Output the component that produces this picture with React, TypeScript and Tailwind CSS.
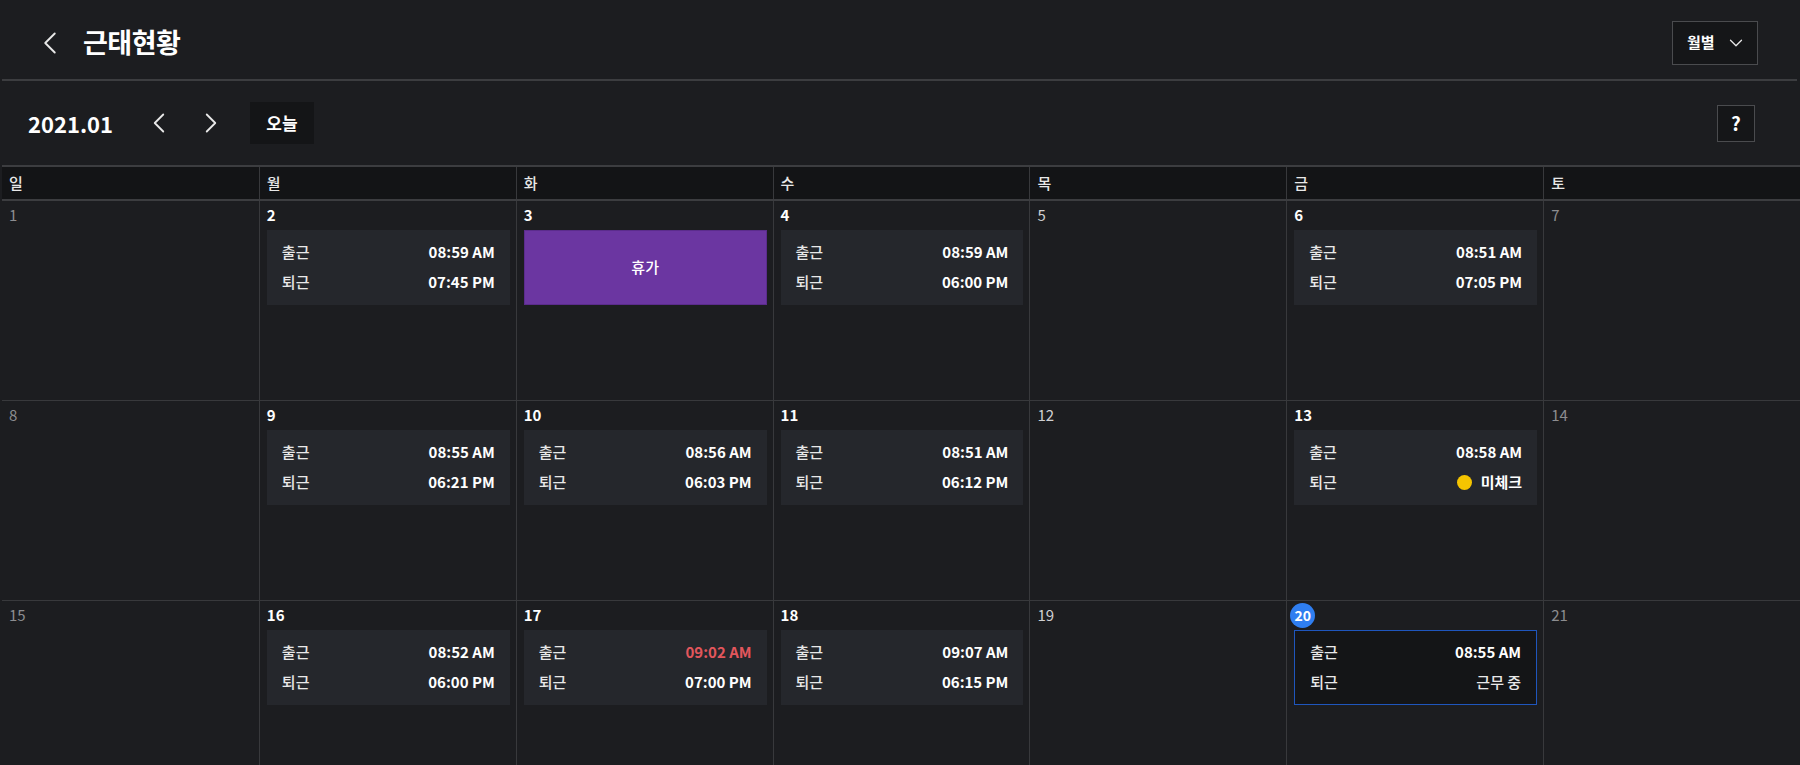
import { ChevronDown, ChevronLeft, ChevronRight } from "lucide-react";

type Day = {
  date: number;
  tone: "weekend" | "empty" | "work";
  inTime?: string;
  outTime?: string;
  late?: boolean;
  vacation?: boolean;
  unchecked?: boolean;
  today?: boolean;
};

const weekdays = ["일", "월", "화", "수", "목", "금", "토"];

const weeks: Day[][] = [
  [
    { date: 1, tone: "weekend" },
    { date: 2, tone: "work", inTime: "08:59 AM", outTime: "07:45 PM" },
    { date: 3, tone: "work", vacation: true },
    { date: 4, tone: "work", inTime: "08:59 AM", outTime: "06:00 PM" },
    { date: 5, tone: "empty" },
    { date: 6, tone: "work", inTime: "08:51 AM", outTime: "07:05 PM" },
    { date: 7, tone: "weekend" },
  ],
  [
    { date: 8, tone: "weekend" },
    { date: 9, tone: "work", inTime: "08:55 AM", outTime: "06:21 PM" },
    { date: 10, tone: "work", inTime: "08:56 AM", outTime: "06:03 PM" },
    { date: 11, tone: "work", inTime: "08:51 AM", outTime: "06:12 PM" },
    { date: 12, tone: "empty" },
    { date: 13, tone: "work", inTime: "08:58 AM", unchecked: true },
    { date: 14, tone: "weekend" },
  ],
  [
    { date: 15, tone: "weekend" },
    { date: 16, tone: "work", inTime: "08:52 AM", outTime: "06:00 PM" },
    { date: 17, tone: "work", inTime: "09:02 AM", outTime: "07:00 PM", late: true },
    { date: 18, tone: "work", inTime: "09:07 AM", outTime: "06:15 PM" },
    { date: 19, tone: "empty" },
    { date: 20, tone: "work", inTime: "08:55 AM", today: true },
    { date: 21, tone: "weekend" },
  ],
];

function DayNumber({ day }: { day: Day }) {
  if (day.today) {
    return (
      <div className="flex h-[28px] items-center pt-[1px]">
        <span className="-ml-[4px] flex h-[25px] w-[25px] items-center justify-center rounded-full bg-[#2f7ef0] text-[14px] font-bold text-white">
          {day.date}
        </span>
      </div>
    );
  }
  const color =
    day.tone === "weekend"
      ? "text-[#8c8d90] font-normal"
      : day.tone === "empty"
        ? "text-[#cfd0d2] font-normal"
        : "text-white font-bold";
  return <div className={`h-[28px] pt-[3px] text-[15px] leading-[22px] ${color}`}>{day.date}</div>;
}

function Cell({ day }: { day: Day }) {
  return (
    <div className="h-[199px] border-l border-[#38393c] pl-[7px] pr-[6px] first:border-l-0">
      <DayNumber day={day} />
      {day.vacation ? (
        <div className="mt-[1px] flex h-[75px] items-center justify-center border border-[#5b2c8c] bg-[#6b36a1] text-[15px] font-medium text-white">
          휴가
        </div>
      ) : day.inTime ? (
        <div
          className={`mt-[1px] flex h-[75px] flex-col justify-center gap-[8px] px-[15px] text-[15px] ${
            day.today ? "border border-[#1f56bd] bg-[#141517]" : "bg-[#25272c]"
          }`}
        >
          <div className="flex h-[22px] items-center justify-between">
            <span className="font-medium text-[#e8e8e8]">출근</span>
            <span className={`font-bold ${day.late ? "text-[#e2565c]" : "text-white"}`}>{day.inTime}</span>
          </div>
          <div className="flex h-[22px] items-center justify-between">
            <span className="font-medium text-[#e8e8e8]">퇴근</span>
            {day.outTime ? (
              <span className="font-bold text-white">{day.outTime}</span>
            ) : day.unchecked ? (
              <span className="flex items-center gap-[9px] font-bold text-white">
                <span className="h-[15px] w-[15px] rounded-full bg-[#f5c400]" />
                미체크
              </span>
            ) : (
              <span className="font-medium text-[#e8e8e8]">근무 중</span>
            )}
          </div>
        </div>
      ) : null}
    </div>
  );
}

export default function App() {
  return (
    <div
      className="h-[765px] w-[1800px] overflow-hidden bg-[#1c1d20] text-white"
      style={{ fontFamily: '"Noto Sans CJK KR", "Noto Sans", sans-serif' }}
    >
      <header className="flex h-[79px] items-center justify-between pl-[31px] pr-[42px] pt-[6px]">
        <div className="flex items-center gap-[14px]">
          <ChevronLeft className="h-[38px] w-[38px] text-[#e8e8e8]" strokeWidth={1.2} />
          <h1 className="text-[27px] font-bold tracking-[-0.5px]">근태현황</h1>
        </div>
        <button
          type="button"
          className="flex h-[44px] w-[86px] items-center justify-between border border-[#4a4b4e] bg-[#151618] pl-[14px] pr-[10px] text-[15px] font-bold"
        >
          월별
          <ChevronDown className="h-[22px] w-[22px] text-[#e8e8e8]" strokeWidth={1.4} />
        </button>
      </header>
      <div className="ml-[2px] mr-[3px] h-[2px] bg-[#3c3d40]" />

      <div className="flex h-[84px] items-center justify-between pl-[28px] pr-[45px]">
        <div className="flex items-center">
          <span className="w-[114px] text-[22px] font-bold">2021.01</span>
          <ChevronLeft className="h-[34px] w-[34px] text-[#e8e8e8]" strokeWidth={1.3} />
          <ChevronRight className="ml-[18px] h-[34px] w-[34px] text-[#e8e8e8]" strokeWidth={1.3} />
          <button
            type="button"
            className="ml-[22px] flex h-[42px] w-[64px] items-center justify-center bg-[#141517] text-[17px] font-bold"
          >
            오늘
          </button>
        </div>
        <button
          type="button"
          className="flex h-[37px] w-[38px] items-center justify-center border border-[#4a4b4e] bg-[#151618] text-[19px] font-bold"
        >
          ?
        </button>
      </div>
      <div className="ml-[2px] h-[2px] bg-[#3c3d40]" />

      <div className="pl-[2px]">
        <div className="grid h-[34px] grid-cols-7 border-b-2 border-[#3c3d40] bg-[#131416]">
          {weekdays.map((w) => (
            <div
              key={w}
              className="flex items-center border-l border-[#38393c] pl-[7px] text-[15px] font-medium text-[#e8e8e8] first:border-l-0"
            >
              {w}
            </div>
          ))}
        </div>
        {weeks.map((week, i) => (
          <div key={i} className="grid grid-cols-7 border-b border-[#38393c]">
            {week.map((day) => (
              <Cell key={day.date} day={day} />
            ))}
          </div>
        ))}
      </div>
    </div>
  );
}
